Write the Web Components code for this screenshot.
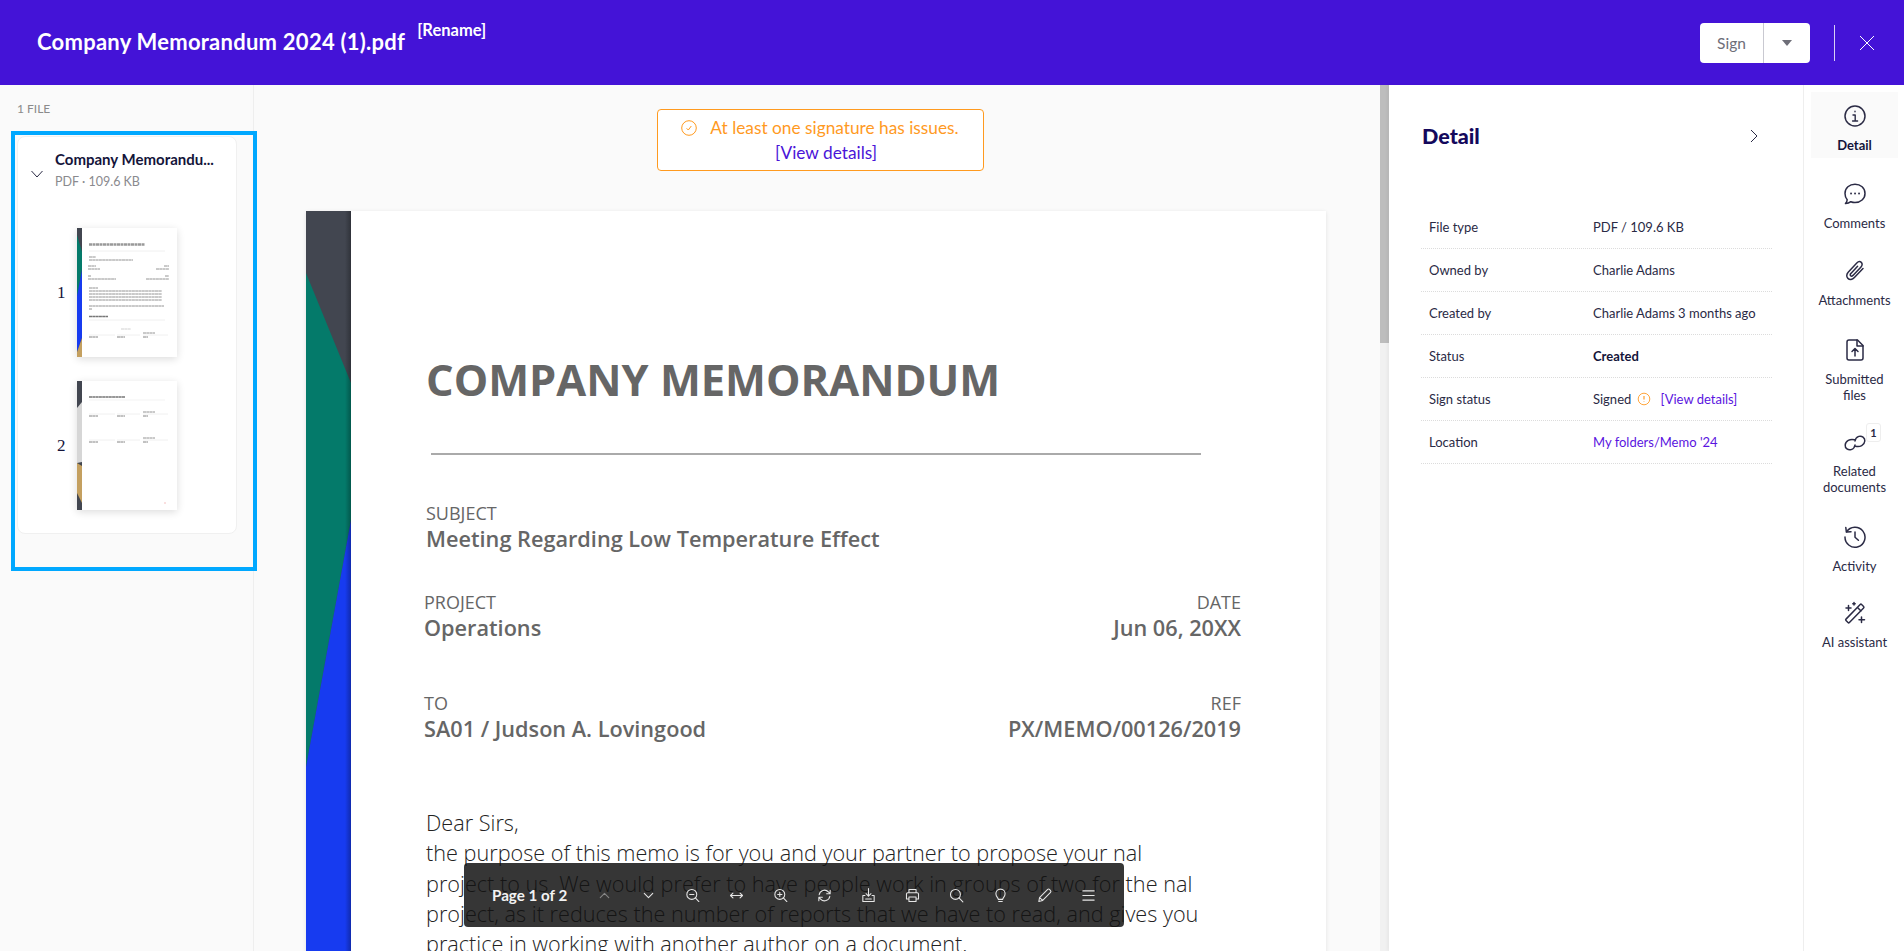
<!DOCTYPE html>
<html lang="en">
<head>
<meta charset="utf-8">
<title>Company Memorandum 2024 (1).pdf</title>
<style>
  html, body { margin: 0; height: 100%; overflow: hidden; background: #fff; }
  body { font-family: "Lato", "Noto Sans", sans-serif; color: #14143a; }
</style>
</head>
<body>
<app-shell></app-shell>

<script>
const ink = '#2b2b45';

function define(tag, html, setup) {
  customElements.define(tag, class extends HTMLElement {
    constructor() {
      super();
      this.attachShadow({ mode: 'open' });
      this.shadowRoot.innerHTML = typeof html === 'function' ? html(this) : html;
    }
    connectedCallback() {
      if (setup) setup(this);
    }
  });
}

function svg(size, body, color) {
  return `<svg width="${size}" height="${size}" viewBox="0 0 24 24" fill="none" stroke="${color || ink}" stroke-width="1.5" stroke-linecap="round" stroke-linejoin="round">${body}</svg>`;
}

const navIcons = {
  info: '<circle cx="12" cy="12" r="10"/><path d="M12 7.2v.6M10 11h2.2v6M9.6 17h5" stroke-width="1.4"/>',
  comment: '<path d="M12 2.2c5.6 0 10 3.9 10 9.2s-4.4 9.1-10 9.1c-1.5 0-2.9-.3-4.2-.8-1.2.9-3 1.7-5.3 1.9 1-1.2 1.6-2.5 1.7-3.9C2.9 16.100 2 13.900 2 11.400 2 6.100 6.400 2.200 12 2.200z"/><path d="M8 11.500h.1M12 11.500h.1M16 11.500h.1" stroke-width="1.800"/>',
  clip: '<path d="M20 9.500l-8.600 9.100c-2 2.100-4.800 2.400-6.500.8-1.700-1.600-1.500-4.400.5-6.500l8.400-8.900c1.400-1.500 3.300-1.700 4.500-.6 1.200 1.100 1.100 3-.3 4.500l-8 8.500c-.8.800-1.800 1-2.400.4-.6-.6-.5-1.600.3-2.400l6.700-7.100"/>',
  upload: '<path d="M6 2h8.500L20 7.500V20a2 2 0 0 1-2 2H6a2 2 0 0 1-2-2V4a2 2 0 0 1 2-2z"/><path d="M14 2v6h6M12 18v-7M9 13.500l3-3 3 3"/>',
  link: '<path d="M11.500 9.800C7 8.500 2.500 11 2.200 15c-.3 3.500 3 5.500 6 4.600 2.200-.7 3.500-2.200 3.800-4.600"/><path d="M12.500 16.200C17 17.500 21.500 15 21.800 11c.3-3.500-3-5.500-6-4.600-2.200.7-3.500 2.200-3.800 4.600"/>',
  history: '<path d="M3.600 6.800A10 10 0 1 1 2 12"/><path d="M2.800 2.500l.6 4.600 4.600-.4M12 7v5.300l3.400 3"/>',
  wand: '<path d="M5 21.500l-2-2a1 1 0 0 1 0-1.400L17.200 3.500a1 1 0 0 1 1.400 0l2 2a1 1 0 0 1 0 1.400L6.400 21.500a1 1 0 0 1-1.400 0zM14.500 6.500l3.500 3.500"/><path d="M5.500 4.500v5M3 7h5M18.500 16v5.500M16 18.800h5.500M11 1.500v2.500M9.800 2.800h2.400"/>'
};

const toolIcons = {
  up: '<path d="M6 15l6-6 6 6"/>',
  down: '<path d="M6 9l6 6 6-6"/>',
  zoomout: '<circle cx="11" cy="10.500" r="7"/><path d="M16 15.500l5 5M8 10.500h6"/>',
  fit: '<path d="M4 12h16M7 8.500L3.500 12 7 15.500M17 8.500l3.500 3.500-3.500 3.500"/>',
  zoomin: '<circle cx="11" cy="10.500" r="7"/><path d="M16 15.500l5 5M8 10.500h6M11 7.500v6"/>',
  rotate: '<path d="M4.500 11a7.500 7.500 0 0 1 13-4l2.500 2.500M20 4.500v5h-5M19.500 13a7.500 7.500 0 0 1-13 4L4 14.500M4 19.500v-5h5"/>',
  save: '<path d="M12 2v11M8.500 9.500L12 13l3.500-3.500M7 12H4v8.500h16V12h-3M8 17h8"/>',
  print: '<path d="M7 8V3.500h10V8M7 17H3.500v-7A2 2 0 0 1 5.500 8h13a2 2 0 0 1 2 2v7H17M7 14h10v6.500H7z"/>',
  search: '<circle cx="10.500" cy="10.500" r="7"/><path d="M15.500 15.500l5.500 5.500"/>',
  bulb: '<path d="M9 17.500c0-2-3.500-3.700-3.500-8a6.500 6.500 0 0 1 13 0c0 4.300-3.500 6-3.500 8zM9.500 20.500h5"/>',
  pen: '<path d="M4 20.500l1-5.500L16.500 3.500a1.800 1.800 0 0 1 2.500 0l1.500 1.500a1.800 1.800 0 0 1 0 2.500L9.500 19zM5 15l4.500 4"/>',
  menu: '<path d="M4 5.500h16M4 12h16M4 18.500h16"/>'
};

define('app-header', `
  <style>
    :host { display: flex; align-items: center; height: 85px; background: #4413d7; color: #fff; flex: none; }
    .title { margin-left: 37px; font-size: 22px; font-weight: 700; letter-spacing: .25px; white-space: nowrap; position: relative; top: -1px; }
    .rename { margin-left: 12px; font-size: 16.500px; font-weight: 700; position: relative; top: -13px; }
    .sign { margin-left: auto; display: flex; width: 110px; height: 40px; background: #fff; border-radius: 4px; color: #6e6e78; }
    .sign span { width: 63px; display: flex; align-items: center; justify-content: center; font-size: 15.500px; border-right: 1px solid #c9c9d1; }
    .sign i { flex: 1; display: flex; align-items: center; justify-content: center; }
    .sign i::before { content: ""; border: 5.500px solid transparent; border-top: 6px solid #6e6e78; border-bottom: 0; }
    .sep { width: 1px; height: 36px; background: #d8d0f5; margin: 0 24px 0 24px; }
    .close { width: 16px; height: 16px; margin-right: 29px; }
  </style>
  <div class="title">Company Memorandum 2024 (1).pdf</div>
  <div class="rename">[Rename]</div>
  <div class="sign"><span>Sign</span><i></i></div>
  <div class="sep"></div>
  <svg class="close" viewBox="0 0 16 16" stroke="#fff" fill="none"><path d="M1 1l14 14M15 1L1 15"/></svg>
`);

function stripes(rows) {
  return rows.map(r => `<path d="M${r[0]} ${r[2]}H${r[1]}" stroke="${r[3] || '#888'}" stroke-width="${r[4] || .9}" stroke-dasharray="${r[5] || '3 .3'}"/>`).join('');
}

const signRows = y => [[12, 38, y + 2, '#f0f0f0', 1, 'none'], [40, 63, y + 2, '#f0f0f0', 1, 'none'], [66, 91, y + 2, '#f0f0f0', 1, 'none'],
  [12, 21, y + 4, '#777'], [40, 48, y + 4, '#777'], [66, 71, y + 4, '#777'], [66, 78, y, '#888']];

define('page-thumb', el => {
  const first = el.getAttribute('n') === '1';
  const strip = first
    ? '<rect width="5" height="129" fill="#424650"/><path d="M0 7L5 24V42L0 70z" fill="#047a6a"/><path d="M5 42V110L0 124V68z" fill="#173bf0"/><path d="M0 129V124L5 110V129z" fill="#c4a060"/>'
    : '<rect width="5" height="129" fill="#424650"/><path d="M0 27L5 21V81L0 82z" fill="#d6d6d6"/><path d="M0 82L5 85V122L0 112z" fill="#c4a060"/>';
  const rows = first
    ? [[12, 68, 16.500, '#999', 2.600, '3 .5'], [12, 88, 23, '#f0f0f0', 1, 'none'], [12, 19, 29], [12, 56, 32], [11, 19, 38], [11, 23, 41], [87, 92, 38], [79, 92, 41],
       [11, 14, 48], [11, 39, 51], [88, 92, 48], [69, 92, 51], [12, 21, 60], [12, 85, 63], [12, 85, 66], [12, 85, 69], [12, 85, 72], [12, 87, 78], [12, 15, 81],
       [12, 31, 88.500, '#777', 1.600], [12, 88, 92, '#f0f0f0', 1, 'none'], [44, 54, 101, '#ccc']].concat(signRows(105))
    : [[12, 48, 16, '#777', 1.600], [12, 88, 19, '#f3f3f3', 1, 'none']].concat(signRows(31), signRows(57), [[87, 89, 122, '#f3b8b8']]);
  return `
    <style>
      :host { display: flex; align-items: center; height: 129px; }
      b { width: 59px; padding-left: 39px; box-sizing: border-box; font: 400 17px "Liberation Serif", serif; color: #14143a; }
      svg { width: 100px; height: 129px; background: #fff; box-shadow: 0 2px 8px rgba(0,0,0,.14); }
      g { filter: blur(.25px); }
    </style>
    <b>${el.getAttribute('n')}</b>
    <svg viewBox="0 0 100 129" fill="none">${strip}<g>${stripes(rows)}</g></svg>
  `;
});

define('file-card', `
  <style>
    :host { display: block; box-sizing: border-box; width: 220px; height: 398px; margin: 1px 0 0 2px; background: #fff; border: 1px solid #f0f0f0; border-radius: 8px; }
    .top { display: flex; padding: 13px 0 0 13px; }
    svg { margin-top: 20px; flex: none; }
    .name { margin-left: 12px; font-size: 15px; font-weight: 700; line-height: 18px; color: #14143a; white-space: nowrap; }
    .meta { margin: 5px 0 0 12px; font-size: 12.500px; line-height: 18px; color: #8a8a8e; }
    .pages { display: flex; flex-direction: column; gap: 24px; margin-top: 37px; }
  </style>
  <div class="top">
    <svg width="12" height="8" viewBox="0 0 12 8" fill="none" stroke="#2b2b45"><path d="M.5 1L6 7l5.500-6"/></svg>
    <div>
      <div class="name">Company Memorandu...</div>
      <div class="meta">PDF · 109.6 KB</div>
    </div>
  </div>
  <div class="pages"><slot></slot></div>
`);

define('file-pane', `
  <style>
    :host { display: block; flex: none; width: 254px; box-sizing: border-box; background: #fafafa; border-right: 1px solid #eee; position: relative; z-index: 2; }
    .count { padding: 15px 0 0 17px; font-size: 12px; line-height: 18px; color: #8b8b8b; }
    .selected { box-sizing: border-box; width: 246px; height: 440px; margin: 13px 0 0 11px; border: 4px solid #00a8ff; }
  </style>
  <div class="count">1 FILE</div>
  <div class="selected"><slot></slot></div>
`);

define('sig-banner', `
  <style>
    :host { display: block; box-sizing: border-box; width: 327px; height: 62px; margin: 24px auto 0; position: relative; left: 3px; background: #fff; border: 1px solid #ff9a1f; border-radius: 4px; text-align: center; font-size: 17.300px; line-height: 20px; color: #ff9a1f; }
    .line { display: flex; justify-content: center; align-items: center; gap: 13px; margin-top: 8px; }
    a { display: block; margin-top: 5px; padding-left: 12px; color: #4a14d8; }
  </style>
  <div class="line">
    <svg width="16" height="16" viewBox="0 0 16 16" fill="none" stroke="#ff9a1f"><circle cx="8" cy="8" r="7.300"/><path d="M5.600 8.300L7.300 10l3-4"/></svg>
    <span>At least one signature has issues.</span>
  </div>
  <a>[View details]</a>
`);

define('memo-field', el => `
  <style>
    :host { display: block; text-align: ${el.hasAttribute('end') ? 'right' : 'left'}; color: #666; }
    .k { font-size: 18px; line-height: 24px; }
    .v { font-size: 21.700px; font-weight: 600; line-height: 28px; }
  </style>
  <div class="k">${el.getAttribute('k')}</div>
  <div class="v">${el.getAttribute('v')}</div>
`);

define('memo-page', `
  <style>
    :host { display: flex; width: 1020px; height: 900px; margin: 40px 0 0 52px; background: #fff; box-shadow: 0 1px 4px rgba(0,0,0,.1); font-family: "Open Sans", sans-serif; }
    .strip { flex: none; display: block; }
    .body { flex: 1; padding: 0 85px 0 75px; }
    h1 { margin: 141px 0 0 0; font-size: 43.400px; line-height: 56px; font-weight: 700; color: #666; white-space: nowrap; }
    hr { width: 770px; margin: 45px 0 0 5px; height: 2px; border: 0; background: #aaa; }
    .subject { margin: 46px 0 0; }
    .pair { display: flex; justify-content: space-between; margin-left: -2px; }
    .one { margin-top: 37px; }
    .two { margin-top: 49px; }
    p { margin: 65px 0 0 0; font-size: 21.660px; line-height: 30.300px; font-weight: 300; color: #222; white-space: nowrap; }
  </style>
  <svg class="strip" width="45" height="900" viewBox="0 0 45 900">
    <defs><linearGradient id="edge" x1="0" x2="1"><stop offset="0" stop-color="#000" stop-opacity="0"/><stop offset="1" stop-color="#000" stop-opacity=".28"/></linearGradient></defs>
    <rect width="45" height="900" fill="#424650"/>
    <path d="M0 62L45 172V309L0 556z" fill="#047a6a"/>
    <path d="M45 309L0 556V900H45z" fill="#173bf0"/>
    <rect x="39" width="6" height="900" fill="url(#edge)"/>
  </svg>
  <div class="body">
    <h1>COMPANY MEMORANDUM</h1>
    <hr>
    <memo-field class="subject" k="SUBJECT" v="Meeting Regarding Low Temperature Effect"></memo-field>
    <div class="pair one">
      <memo-field k="PROJECT" v="Operations"></memo-field>
      <memo-field end k="DATE" v="Jun 06, 20XX"></memo-field>
    </div>
    <div class="pair two">
      <memo-field k="TO" v="SA01 / Judson A. Lovingood"></memo-field>
      <memo-field end k="REF" v="PX/MEMO/00126/2019"></memo-field>
    </div>
    <p>Dear Sirs,<br>the purpose of this memo is for you and your partner to propose your nal<br>project to us. We would prefer to have people work in groups of two for the nal<br>project, as it reduces the number of reports that we have to read, and gives you<br>practice in working with another author on a document.</p>
  </div>
`);

define('tool-button', el => `
  <style>
    :host { display: flex; flex: none; width: 44px; justify-content: center; align-items: center; }
    :host([dim]) svg { opacity: .45; }
  </style>
  ${svg(17, toolIcons[el.getAttribute('icon')], '#e6e6e6')}
`);

define('view-toolbar', () => `
  <style>
    :host { position: absolute; left: 210px; top: 778px; width: 660px; height: 64px; display: flex; align-items: center; border-radius: 4px; background: rgba(19,19,19,.85); color: #f2f2f2; }
    .page { width: 118px; padding-left: 28px; box-sizing: border-box; font-size: 15.200px; font-weight: 700; white-space: nowrap; }
    .tools { display: flex; }
  </style>
  <div class="page">Page 1 of 2</div>
  <div class="tools">
    <tool-button icon="up" dim></tool-button><tool-button icon="down"></tool-button><tool-button icon="zoomout"></tool-button>
    <tool-button icon="fit"></tool-button><tool-button icon="zoomin"></tool-button><tool-button icon="rotate"></tool-button>
    <tool-button icon="save"></tool-button><tool-button icon="print"></tool-button><tool-button icon="search"></tool-button>
    <tool-button icon="bulb"></tool-button><tool-button icon="pen"></tool-button><tool-button icon="menu"></tool-button>
  </div>
`);

define('doc-viewer', `
  <style>
    :host { display: flex; flex: 1; min-width: 0; position: relative; background: #fafafa; overflow: hidden; }
    .scroll { flex: 1; min-width: 0; overflow: hidden; }
    .track { flex: none; width: 9px; background: #f1f1f1; }
    .thumb { height: 258px; background: #bdbdbd; }
  </style>
  <div class="scroll"><slot></slot></div>
  <div class="track"><div class="thumb"></div></div>
`);

define('detail-row', `
  <style>
    :host { display: grid; grid-template-columns: 164px 1fr; align-items: center; height: 42px; padding-left: 8px; border-bottom: 1px dotted #dcdcdc; font-size: 13px; color: #2a2a45; }
  </style>
  <slot name="k"></slot>
  <div><slot></slot></div>
`);

define('detail-panel', `
  <style>
    :host { display: block; flex: none; width: 415px; box-sizing: border-box; background: #fff; border-right: 1px solid #eee; padding: 0 31px 0 32px; box-shadow: -2px 0 3px rgba(0,0,0,.04); position: relative; }
    .head { display: flex; justify-content: space-between; align-items: center; height: 36px; margin-top: 33px; }
    h2 { margin: 0 0 0 1px; font-size: 21.500px; font-weight: 900; color: #14085c; }
    svg { margin-right: 14px; }
    .rows { margin-top: 52px; }
  </style>
  <div class="head">
    <h2>Detail</h2>
    <svg width="8" height="14" viewBox="0 0 8 14" fill="none" stroke="#2b2b45"><path d="M1 1l6 6-6 6"/></svg>
  </div>
  <div class="rows"><slot></slot></div>
`);

define('nav-item', el => `
  <style>
    :host { display: block; box-sizing: border-box; position: relative; text-align: center; font-size: 13px; line-height: 16px; color: #2a2a45; padding: 12px 7px 5px; width: 87px; }
    :host([active]) { background: #fafafa; color: #14143a; font-weight: 700; }
    svg { display: block; margin: 0 auto 9px; }
    .badge { position: absolute; left: 55px; top: 5px; width: 15px; height: 19px; box-sizing: border-box; border: 1px solid #eee; border-radius: 3px; background: #fff; font-size: 11px; line-height: 17px; font-weight: 700; }
  </style>
  ${svg(24, navIcons[el.getAttribute('icon')])}
  ${el.hasAttribute('badge') ? `<span class="badge">${el.getAttribute('badge')}</span>` : ''}
  <slot></slot>
`);

define('side-nav', `
  <style>
    :host { flex: none; width: 100px; box-sizing: border-box; padding: 7px 0 0 7px; background: #fff; }
  </style>
  <slot></slot>
`);

define('app-shell', `
  <style>
    :host { display: flex; flex-direction: column; height: 951px; }
    .main { flex: 1; display: flex; min-height: 0; }
    a, b { color: inherit; }
  </style>
  <app-header></app-header>
  <div class="main">
    <file-pane>
      <file-card>
        <page-thumb n="1"></page-thumb>
        <page-thumb n="2"></page-thumb>
      </file-card>
    </file-pane>
    <doc-viewer>
      <sig-banner></sig-banner>
      <memo-page></memo-page>
      <view-toolbar></view-toolbar>
    </doc-viewer>
    <detail-panel>
      <detail-row><span slot="k">File type</span>PDF / 109.6 KB</detail-row>
      <detail-row><span slot="k">Owned by</span>Charlie Adams</detail-row>
      <detail-row><span slot="k">Created by</span>Charlie Adams 3 months ago</detail-row>
      <detail-row><span slot="k">Status</span><b style="color:#14143a">Created</b></detail-row>
      <detail-row><span slot="k">Sign status</span>Signed <svg width="14" height="14" viewBox="0 0 14 14" fill="none" stroke="#ffa63d" style="vertical-align:-2px;margin:0 10px 0 2px"><circle cx="7" cy="7" r="5.800"/><path d="M7 4v3.500M7 9.500v.6" stroke-width="1.300"/></svg><span style="color:#5a14e0">[View details]</span></detail-row>
      <detail-row><span slot="k">Location</span><span style="color:#5a14e0">My folders/Memo '24</span></detail-row>
    </detail-panel>
    <side-nav>
      <nav-item icon="info" active>Detail</nav-item>
      <nav-item icon="comment" style="margin-top:12px">Comments</nav-item>
      <nav-item icon="clip" style="margin-top:11px">Attachments</nav-item>
      <nav-item icon="upload" style="margin-top:13px">Submitted files</nav-item>
      <nav-item icon="link" badge="1" style="margin-top:10px">Related documents</nav-item>
      <nav-item icon="history" style="margin-top:13px">Activity</nav-item>
      <nav-item icon="wand" style="margin-top:10px">AI assistant</nav-item>
    </side-nav>
  </div>
`);
</script>
</body>
</html>
